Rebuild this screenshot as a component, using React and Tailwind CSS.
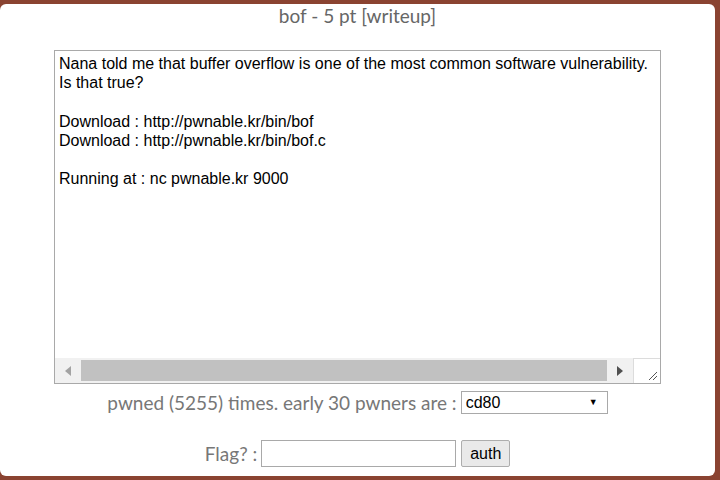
import React from 'react';

const lines = [
    'Nana told me that buffer overflow is one of the most common software vulnerability.',
    'Is that true?',
    '',
    'Download : http://pwnable.kr/bin/bof',
    'Download : http://pwnable.kr/bin/bof.c',
    '',
    'Running at : nc pwnable.kr 9000',
];

const ScrollBar = () => (
    <div className="flex h-[25px] items-stretch">
        <div className="flex flex-1 bg-[#f1f1f1] py-[2px]">
            <div className="flex w-[26px] items-center justify-center">
                <svg width="6" height="10" viewBox="0 0 6 10"><path d="M6 0 L0 5 L6 10 Z" fill="#a3a3a3" /></svg>
            </div>
            <div className="flex-1 bg-[#c1c1c1]" />
            <div className="flex w-[26px] items-center justify-center">
                <svg width="6" height="10" viewBox="0 0 6 10"><path d="M0 0 L6 5 L0 10 Z" fill="#505050" /></svg>
            </div>
        </div>
        <div className="relative w-[27px] border-l border-t border-[#dcdcdc] bg-white">
            <svg className="absolute bottom-[2px] right-[2px]" width="12" height="12" viewBox="0 0 12 12">
                <path d="M11 3 L3 11 M11 7 L7 11" stroke="#555" strokeWidth="1" />
            </svg>
        </div>
    </div>
);

export default function App() {
    return (
        <div className="h-[480px] w-[720px] bg-[#8a4331] pt-[4px] pr-[5px] pb-[4px]">
            <div className="flex h-[472px] flex-col items-center rounded-[6px] bg-white">
                <div className="font-['Lato',sans-serif] text-[19px] leading-[24px] text-[#666]">
                    bof - 5 pt [writeup]
                </div>

                <div className="mt-[22px] flex h-[334px] w-[607px] flex-col border border-[#a9a9a9] bg-white">
                    <div className="flex-1 overflow-hidden whitespace-pre pl-[4px] pt-[3px] font-['Liberation_Sans',Arial,sans-serif] text-[16px] leading-[19.2px] text-black">
                        {lines.map((l, i) => (
                            <div key={i} className="h-[19.2px]">{l}</div>
                        ))}
                    </div>
                    <ScrollBar />
                </div>

                <div className="mt-[7px] flex items-center gap-[4px]">
                    <span className="font-['Lato',sans-serif] text-[19px] leading-[22px] text-[#777]">
                        pwned (5255) times. early 30 pwners are :
                    </span>
                    <div className="flex h-[23px] w-[147px] items-center justify-between border border-[#a9a9a9] bg-white pl-[4px] pr-[9px] font-['Liberation_Sans',Arial,sans-serif] text-[16px] text-black">
                        <span>cd80</span>
                        <span className="text-[9px]">▼</span>
                    </div>
                </div>

                <div className="mt-[26px] flex items-center">
                    <span className="font-['Lato',sans-serif] text-[19px] leading-[22px] text-[#777]">Flag? :</span>
                    <div className="ml-[4px] h-[27px] w-[195px] border border-[#a9a9a9] bg-white" />
                    <button className="ml-[5px] h-[27px] w-[49px] rounded-[2px] border border-[#adadad] bg-[#e9e9e9] font-['Liberation_Sans',Arial,sans-serif] text-[16px] text-black">
                        auth
                    </button>
                </div>
            </div>
        </div>
    );
}
